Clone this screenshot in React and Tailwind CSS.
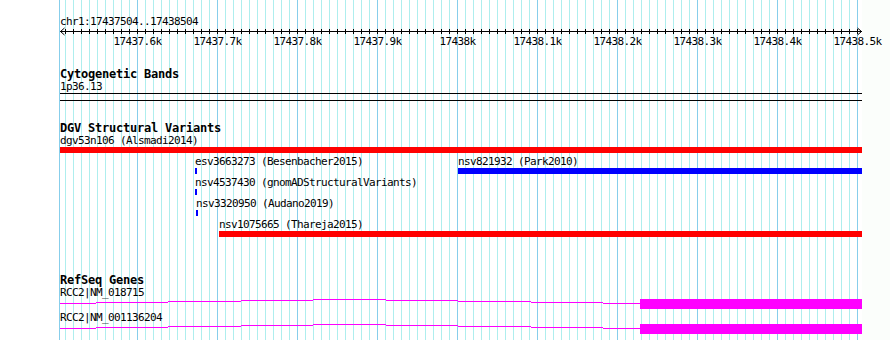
const REG = "text-[11px] leading-[11px] h-[11px] tracking-[-0.62px] whitespace-nowrap";
const BOLD = "text-[12px] leading-[12px] h-[12px] font-bold tracking-[-0.22px] whitespace-nowrap";

const COLORS = { red: "bg-[#ff0000]", blue: "bg-[#0000ff]" };

const TICKS = [
  "17437.6k",
  "17437.7k",
  "17437.8k",
  "17437.9k",
  "17438k",
  "17438.1k",
  "17438.2k",
  "17438.3k",
  "17438.4k",
  "17438.5k",
];

const ROWS = [
  [{ x: 0, w: 802, color: "red", label: "dgv53n106 (Alsmadi2014)" }],
  [
    { x: 135, w: 2, color: "blue", label: "esv3663273 (Besenbacher2015)" },
    { x: 398, w: 404, color: "blue", label: "nsv821932 (Park2010)" },
  ],
  [{ x: 135, w: 2, color: "blue", label: "nsv4537430 (gnomADStructuralVariants)" }],
  [{ x: 136, w: 2, color: "blue", label: "nsv3320950 (Audano2019)" }],
  [{ x: 159, w: 643, color: "red", label: "nsv1075665 (Thareja2015)" }],
];

const minors = Array.from({ length: 100 }, (_, k) => 5 + 8 * k);

function Grid() {
  return (
    <div className="absolute inset-0">
      {minors.map((x, k) =>
        k % 10 === 9 ? (
          <div key={k} className="absolute top-0 bottom-0 w-px bg-[#87ceeb]" style={{ left: x }} />
        ) : (
          <div key={k} className="absolute top-0 bottom-0 w-px bg-[#aeeeee]" style={{ left: x }} />
        )
      )}
    </div>
  );
}

function Ruler() {
  return (
    <svg className="block" width="802" height="9" shapeRendering="crispEdges">
      <line x1="0" x2="802" y1="4.5" y2="4.5" stroke="#000" />
      {minors.map((x, k) => (
        <line key={k} x1={x + 0.5} x2={x + 0.5} y1="2" y2="7" stroke="#000" />
      ))}
      <polyline points="4.5,1 0.5,4.5 4.5,8" fill="none" stroke="#000" shapeRendering="auto" />
      <polyline points="797.5,1 801.5,4.5 797.5,8" fill="none" stroke="#000" shapeRendering="auto" />
    </svg>
  );
}

function Feature({ x, w, color, label }) {
  return (
    <div className="absolute top-0" style={{ left: x }}>
      <div className={REG}>{label}</div>
      <div className={`mt-[1px] h-[6px] ${COLORS[color]}`} style={{ width: w }} />
    </div>
  );
}

const HAT = [
  [0, 36, 5],
  [36, 108, 4],
  [108, 181, 3],
  [181, 253, 2],
  [253, 326, 1],
  [326, 398, 2],
  [398, 471, 3],
  [471, 543, 4],
  [543, 580, 5],
];

function Gene() {
  return (
    <svg className="block" width="802" height="12" shapeRendering="crispEdges">
      {HAT.map(([a, b, y], i) => (
        <rect key={i} x={a} y={y} width={b - a} height="1" fill="#ff00ff" />
      ))}
      <rect x="580" y="1" width="222" height="10" fill="#ff00ff" />
    </svg>
  );
}

export default function App() {
  return (
    <div className="flex w-[890px] h-[340px] overflow-hidden bg-white text-black font-['DejaVu_Sans_Mono',monospace]">
      <div className="w-[59px] shrink-0" />
      <div className="relative w-[803px] shrink-0 border-l border-[#87ceeb]">
        <Grid />
        <div className="relative flex flex-col">
          <div className="pt-[16px] h-[27px]">
            <div className={REG}>chr1:17437504..17438504</div>
          </div>
          <Ruler />
          <div className="relative h-[11px]">
            {TICKS.map((t, i) => (
              <div
                key={t}
                className={`absolute top-0 -translate-x-1/2 ${REG}`}
                style={{ left: 77.5 + 80 * i }}
              >
                {t}
              </div>
            ))}
          </div>

          <div className={`mt-[21px] ${BOLD}`}>Cytogenetic Bands</div>
          <div className={`mt-[1px] ${REG}`}>1p36.13</div>
          <div className="mt-[1px] h-px bg-black" />
          <div className="mt-[6px] h-px bg-black" />

          <div className={`mt-[21px] ${BOLD}`}>DGV Structural Variants</div>
          <div className="mt-[1px] flex flex-col">
            {ROWS.map((row, i) => (
              <div key={i} className="relative h-[21px]">
                {row.map((f) => (
                  <Feature key={f.label} {...f} />
                ))}
              </div>
            ))}
          </div>

          <div className={`mt-[34px] ${BOLD}`}>RefSeq Genes</div>
          <div className={`mt-[1px] ${REG}`}>RCC2|NM_018715</div>
          <Gene />
          <div className={`mt-[2px] ${REG}`}>RCC2|NM_001136204</div>
          <Gene />
        </div>
      </div>
      <div className="flex-1 bg-[#fbfefb]" />
    </div>
  );
}
